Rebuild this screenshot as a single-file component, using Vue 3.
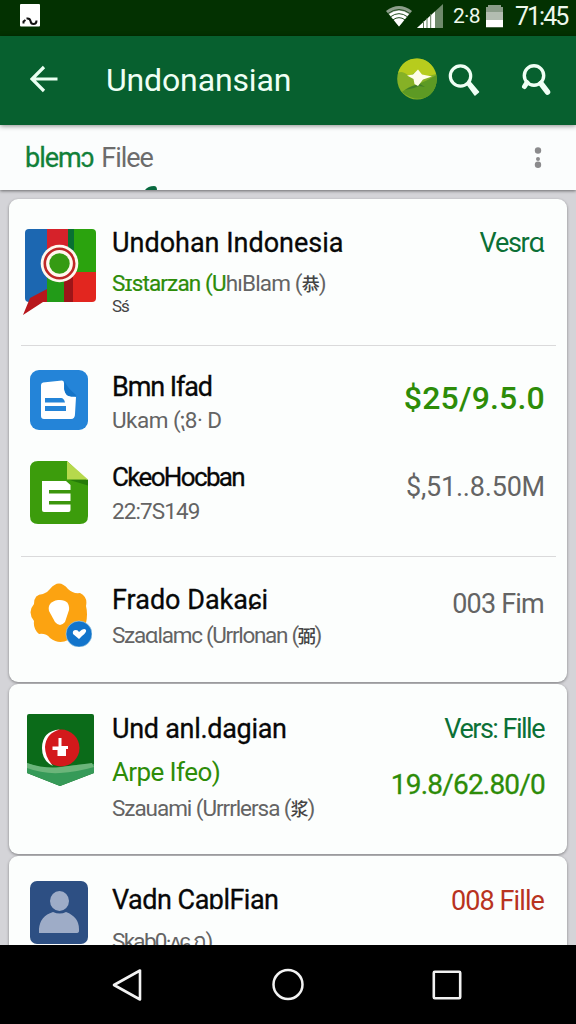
<script setup>
const cards = [
  {
    id: 'one',
    rows: [
      {
        id: 'r1', icon: 'chat',
        lines: [
          { c: 'title t1', parts: [{ t: 'Undohan Indonesia' }] },
          { c: 'sub s1', parts: [{ t: 'Sɪstarzan (U', c: 'lime' }, { t: 'hıBlam (' }, { t: '恭', c: 'cjk' }, { t: ')' }] },
          { c: 'tiny', parts: [{ t: 'Sś' }] },
        ],
        values: [{ c: 'green v1', t: 'Vesrɑ' }],
      },
      {
        id: 'r2', icon: 'doc',
        lines: [
          { c: 'title t2', parts: [{ t: 'Bmn Ifad' }] },
          { c: 'sub s2', parts: [{ t: 'Ukam (⁏8· D' }] },
        ],
        values: [{ c: 'lime v2', t: '$25/9.5.0' }],
      },
      {
        id: 'r3', icon: 'sheet',
        lines: [
          { c: 'title t3', parts: [{ t: 'CkeoHocban' }] },
          { c: 'sub s3', parts: [{ t: '22:7S149' }] },
        ],
        values: [{ c: 'v3', t: '$,51..8.50M' }],
      },
      {
        id: 'r4', icon: 'badge',
        lines: [
          { c: 'title t4', parts: [{ t: 'Frado Dakaɕi' }] },
          { c: 'sub s4', parts: [{ t: 'Szaɑlamc (Urrlonan (' }, { t: '弼', c: 'cjk' }, { t: ')' }] },
        ],
        values: [{ c: 'v4', t: '003 Fim' }],
      },
    ],
  },
  {
    id: 'two',
    rows: [
      {
        id: 'r5', icon: 'shield',
        lines: [
          { c: 'title t5', parts: [{ t: 'Und anl.dagian' }] },
          { c: 'lime sub5', parts: [{ t: 'Arpe Ifeo)' }] },
          { c: 'sub s5', parts: [{ t: 'Szauami (Urrrlersa (' }, { t: '浆', c: 'cjk' }, { t: ')' }] },
        ],
        values: [{ c: 'green v5', t: 'Vers: Fille' }, { c: 'lime v6', t: '19.8/62.80/0' }],
      },
    ],
  },
  {
    id: 'three',
    rows: [
      {
        id: 'r6', icon: 'person',
        lines: [
          { c: 'title t6', parts: [{ t: 'Vadn CaɒlFian' }] },
          { c: 'sub s6', parts: [{ t: 'Skab0·ᴧɕ.ก)' }] },
        ],
        values: [{ c: 'red v7', t: '008 Fille' }],
      },
    ],
  },
]
</script>

<template>
  <div class="screen">
    <header class="status">
      <svg class="note" width="20" height="23" viewBox="0 0 20 23">
        <rect width="20" height="22.500" rx="1" fill="#fff" />
        <path d="M3.500 19.500v-2l2-1.500M6.500 14.500q3.500-.5 4 2.500.5 3 3 3 3 0 3-3.500" fill="none" stroke="#111" stroke-width="2" />
      </svg>
      <span class="grow"></span>
      <svg class="wifi" width="28" height="22" viewBox="0 0 28 22">
        <path d="M1 6Q14-4 27 6L14 21.500z" fill="#8d9f8b" />
        <path d="M4 9Q14 2 24 9L14 21.500z" fill="#fff" />
        <path d="M3 8.500Q14 .5 25 8.500M5.500 11.800Q14 5.500 22.500 11.800M8 14.800Q14 10.500 20 14.800" fill="none" stroke="#244d20" stroke-width="1" />
      </svg>
      <svg class="signal" width="26" height="24" viewBox="0 0 26 24">
        <path d="M26 0v24H0z" fill="#6f8a6c" />
        <path d="M18 7.400V24H0z" fill="#fff" />
        <path d="M6.500 17v7M10 14v10M13.700 10v14" stroke="#5e7a5b" stroke-width="1" />
      </svg>
      <span class="pct">2·8</span>
      <svg class="battery" width="17" height="24" viewBox="0 0 17 24">
        <path d="M2 1h13v2h2v20.500H0V3h2z" fill="#8b9c89" />
        <path d="M0 8h17v8H0z" fill="#b3bdb1" />
        <path d="M0 16h17v7H0z" fill="#fff" />
      </svg>
      <span class="time">71:45</span>
    </header>

    <nav class="toolbar">
      <svg class="back" width="28" height="28" viewBox="0 0 28 28">
        <path d="M14 2L2 14l12 12M2.500 14H27.500" fill="none" stroke="#eafff2" stroke-width="3.200" />
      </svg>
      <h1>Undonansian</h1>
      <svg class="orb" width="40" height="42" viewBox="0 0 40 42">
        <ellipse cx="20" cy="21" rx="19.800" ry="20.600" fill="#86b126" />
        <path d="M1 15C4 5 11 .5 20 .5S36 6 39 16L28 19 19 14 12 18Q5 12 1 15z" fill="#b7cc1d" />
        <path d="M5 34Q12 28 19 27l5-2Q31 22 39.500 17 41 29 33 37 20 46 5 34z" fill="#5d9a24" />
        <path d="M8 32q8-5 15-6l5 3-6-1-5 2z" fill="#427f27" />
        <path d="M10 17.500l6-1 5-5 4 5 10 2-9 3-5 6.500-3.500-2-1-5z" fill="#fffde9" />
      </svg>
      <svg class="search" width="32" height="34" viewBox="0 0 32 34">
        <circle cx="12.500" cy="13" r="10.200" fill="none" stroke="#effff5" stroke-width="3.200" />
        <path d="M19 21l3-2 8.500 10-3.500 3z" fill="#effff5" stroke="#effff5" stroke-width="1.500" stroke-linejoin="round" />
      </svg>
      <svg class="person-search" width="30" height="34" viewBox="0 0 30 34">
        <circle cx="13" cy="12.500" r="9.700" fill="none" stroke="#effff5" stroke-width="3.400" />
        <path d="M20 20.500l6.500 8.500" stroke="#effff5" stroke-width="5.500" stroke-linecap="round" />
        <path d="M6 19.500l-2.500 4" stroke="#effff5" stroke-width="5" stroke-linecap="round" />
      </svg>
    </nav>

    <div class="tabs">
      <span class="tab active">blemɔ</span>
      <span class="tab">Filee</span>
      <svg class="more" width="8" height="22" viewBox="0 0 8 22">
        <circle cx="4" cy="3.500" r="3.200" /><circle cx="4" cy="12" r="2" /><circle cx="4" cy="17.700" r="3.200" />
      </svg>
      <svg class="nub" width="12" height="4" viewBox="0 0 12 4"><path d="M0 4Q3 0 9 0q3 0 3 4z" fill="#08693f" /></svg>
    </div>

    <main class="list">
      <section v-for="card in cards" :key="card.id" class="card">
        <article v-for="row in card.rows" :key="row.id" class="row" :class="row.id">
          <div class="icon">
            <svg v-if="row.icon === 'chat'" width="74" height="88" viewBox="0 0 74 88">
              <defs><clipPath id="bubble"><rect x="2" y="1" width="71" height="73" rx="4" /></clipPath></defs>
              <g clip-path="url(#bubble)">
                <path d="M2 0h22v76H2z" fill="#1c67b1" />
                <path d="M24 0h21v50H24z" fill="#d6222a" />
                <path d="M24 50h17v25H24z" fill="#229b18" />
                <path d="M41 44h9v31h-9z" fill="#9d1518" />
                <path d="M45 0h6v48h-6z" fill="#087033" />
                <path d="M51 0h23v44H51z" fill="#2ba30e" />
                <path d="M50 44h24v31H50z" fill="#e2261f" />
              </g>
              <path d="M24 61v13h-4L0 87 7 70z" fill="#b8171c" />
              <circle cx="36.500" cy="35.500" r="18.800" fill="#fff8ef" />
              <circle cx="36.500" cy="35.500" r="14.700" fill="none" stroke="#bd2726" stroke-width="2.600" />
              <circle cx="36.500" cy="35.500" r="10.200" fill="#359b13" />
            </svg>
            <svg v-else-if="row.icon === 'doc'" width="58" height="60" viewBox="0 0 58 60">
              <rect width="58" height="60" rx="9" fill="#2484d8" />
              <path d="M13 12.500L32 10.500Q34 10.500 34 13v6q1 8 12 8l-1 17q0 5-4 5H14q-3 0-3-3V15q0-2 2-2.500z" fill="#fff" />
              <path d="M34.500 11q2 6 12 14.500Q35 29 34.500 19z" fill="#1474c8" />
              <path d="M15 28h16q3 0 4 4.500H15zM15 36h21v5H15z" fill="#2484d8" />
            </svg>
            <svg v-else-if="row.icon === 'sheet'" width="58" height="63" viewBox="0 0 58 63">
              <path d="M8 0h29l21 20v35q0 8-8 8H8q-8 0-8-8V8q0-8 8-8z" fill="#3c9c0c" />
              <path d="M38 18.500h20v6z" fill="#257b09" />
              <path d="M37 0l21 18.500H37z" fill="#b6d94c" />
              <path d="M12 20h24l4.500 4v25q0 2-2 2H14q-2 0-2-2z" fill="#fff" />
              <path d="M19 29h22v3.500H19zM19 40h22v3.500H19z" fill="#3c960c" />
            </svg>
            <svg v-else-if="row.icon === 'badge'" width="62" height="64" viewBox="0 0 62 64">
              <path d="M20 6q9-11 18 0q5 5 12 4q8 4 6 13q2 8 0 17q-2 7-11 9L38 57q-9 5-18-2q-4-5-11-4Q3 46 4 38q-7-9 0-17Q4 11 13 11q4-1 7-5z" fill="#fca311" />
              <path d="M28 17q12-1 11 10l-4 12q-5 6-10 0l-6-11q-2-9 9-11z" fill="#fff" />
              <circle cx="49" cy="51" r="13" fill="#1274cb" stroke="#b3d6e8" stroke-width=".6" />
              <path d="M49 56l-6-5q-1-4 3-4 2 0 3 2 5-5 7-2 1 2-4 6z" fill="#fff" />
            </svg>
            <svg v-else-if="row.icon === 'shield'" width="67" height="72" viewBox="0 0 67 72">
              <path d="M2 0h63q2 0 2 2v57L33 72 0 59V2q0-2 2-2z" fill="#0b6b19" />
              <path d="M0 49q17 7 34 4t33-3v9L33 72 0 59z" fill="#369a58" />
              <path d="M0 49q18 6 34 4t31-4l2 4q-17 5-34 6T0 54z" fill="#6bb57a" />
              <circle cx="34" cy="34" r="18.500" fill="#d3191b" />
              <path d="M33 15.500Q15 17 15 34q0 13 11 18-8-9-8-19Q19 19 33 15.500z" fill="#fff" />
              <path d="M31.500 24h3v8h6.500v3h-2v7h-8.500v-6h-5v-3.500h6z" fill="#fff" />
            </svg>
            <svg v-else width="58" height="63" viewBox="0 0 58 63">
              <rect width="58" height="63" rx="7" fill="#2d4f83" />
              <ellipse cx="29.500" cy="20" rx="9.500" ry="10" fill="#9eacc7" />
              <path d="M9 52V48q1-13 14-17 7 3 13 0 13 5 13 17v2q0 2-3 2z" fill="#9eacc7" />
            </svg>
          </div>
          <div class="lines">
            <div v-for="(line, i) in row.lines" :key="i" :class="line.c"><span v-for="(p, k) in line.parts" :key="k" :class="p.c">{{ p.t }}</span></div>
          </div>
          <div class="values">
            <div v-for="(v, i) in row.values" :key="i" class="value" :class="v.c">{{ v.t }}</div>
          </div>
        </article>
      </section>
    </main>

    <footer class="navbar">
      <svg width="30" height="34" viewBox="0 0 30 34"><path d="M28 2.500v29L2 17z" fill="none" stroke="#f2f2f2" stroke-width="2.600" stroke-linejoin="round" /></svg>
      <svg width="34" height="34" viewBox="0 0 34 34"><circle cx="18" cy="16.500" r="14.500" fill="none" stroke="#f2f2f2" stroke-width="2.500" /></svg>
      <svg width="30" height="30" viewBox="0 0 30 30"><rect x="1.800" y="1.800" width="26.400" height="26.400" rx="1" fill="none" stroke="#f2f2f2" stroke-width="2.600" /></svg>
    </footer>
  </div>
</template>

<style>
body { margin: 0; background: #000; }
</style>

<style scoped>
.screen {
  width: 576px;
  height: 1024px;
  display: flex;
  flex-direction: column;
  overflow: hidden;
  font-family: Roboto, "Noto Sans CJK SC", sans-serif;
  background: #d4d4d8;
}
svg { display: block; flex: none; }
.grow { flex: 1; }

.status {
  flex: none;
  height: 36px;
  box-sizing: border-box;
  padding: 4px 8px 0 20px;
  display: flex;
  align-items: flex-start;
  color: #eef8ec;
  background: #033101;
}
.wifi { margin-right: 4px; margin-top: 1px; margin-left: -2px; }
.signal { margin-right: 10px; }
.pct { width: 28px; font-size: 21px; line-height: 24px; letter-spacing: -.8px; white-space: nowrap; }
.battery { margin-left: 5px; margin-right: 12px; }
.time { width: 53px; font-size: 25px; line-height: 26px; letter-spacing: -2px; white-space: nowrap; }

.toolbar {
  flex: none;
  height: 89px;
  box-sizing: border-box;
  display: flex;
  align-items: center;
  padding: 0 25px 0 30px;
  background: #07602f;
  box-shadow: 0 1px 5px rgba(0, 0, 0, .45);
  position: relative;
  z-index: 2;
}
h1 {
  margin: -2px 0 0 48px;
  flex: 1;
  font-size: 32px;
  line-height: 40px;
  letter-spacing: -.15px;
  font-weight: 400;
  color: #effff5;
}
.orb { margin-right: 11px; margin-top: -3px; }
.search { margin-right: 41px; margin-top: -2px; }
.person-search { margin-top: -2px; }
.back { margin-top: -3px; }

.tabs {
  flex: none;
  position: relative;
  z-index: 1;
  height: 65px;
  box-sizing: border-box;
  padding: 0 34px 0 25px;
  display: flex;
  align-items: center;
  gap: 8px;
  background: #fbfdfd;
  box-shadow: 0 1px 3px rgba(0, 0, 0, .5);
}
.tab { font-size: 27px; line-height: 32px; color: #6c6c6c; letter-spacing: -1px; }
.tab.active { color: #118039; -webkit-text-stroke: .3px #118039; }
.more { margin-left: auto; fill: #8b8b8d; }
.nub { position: absolute; left: 145px; bottom: 0; }

.list {
  flex: 1;
  min-height: 0;
  overflow: hidden;
  padding: 9px 9px 0;
  display: flex;
  flex-direction: column;
  gap: 2px;
}
.card {
  flex: none;
  border-radius: 9px;
  background: #fcfefd;
  box-shadow: 0 1px 3px rgba(0, 0, 0, .4);
}
.row {
  display: flex;
  box-sizing: border-box;
  padding-right: 22px;
  position: relative;
  color: #646464;
}
.icon { width: 103px; flex: none; box-sizing: border-box; }
.lines { flex: 1; white-space: nowrap; min-width: 0; }
.values { flex: none; text-align: right; white-space: nowrap; }
.title { font-size: 27px; line-height: 32px; color: #080808; -webkit-text-stroke: .3px #080808; }
.sub { font-size: 22.500px; line-height: 28px; }
.cjk { font-size: 18px; line-height: 1; font-weight: 500; color: #444; }
.tiny { font-size: 17px; line-height: 20px; letter-spacing: -1px; color: #444; }
.value { font-size: 27px; line-height: 32px; }
.lime { color: #2d8c08; }
.green { color: #0b7036; }
.red { color: #b8331f; }

.r1::after, .r3::after {
  content: "";
  position: absolute;
  left: 12px;
  right: 11px;
  bottom: 0;
  height: 1.500px;
  background: #dadadb;
}

.r1 { height: 147px; }
.r1 .icon { padding: 29px 0 0 14px; }
.r1 .lines, .r1 .values { padding-top: 28px; }
.s1 { margin-top: 10px; letter-spacing: -.85px; }
.s1 .lime { -webkit-text-stroke: .2px #2d8c08; }
.tiny { margin-top: -1px; }
.v1 { letter-spacing: -1.300px; margin-right: 1px; }

.r2 { height: 104px; }
.r2 .icon { padding: 24px 0 0 21px; }
.r2 .lines { padding-top: 25px; }
.r2 .values { padding-top: 34px; }
.t2 { letter-spacing: -1.100px; }
.s2 { margin-top: 3px; letter-spacing: -.5px; }

.r3 { height: 107px; }
.r3 .icon { padding: 11px 0 0 21px; }
.r3 .lines { padding-top: 11px; }
.r3 .values { padding-top: 21px; }
.t3 { font-size: 26px; letter-spacing: -1.650px; }
.s3 { margin-top: 4px; letter-spacing: -.9px; }
.v3 { letter-spacing: -.2px; }

.r4 { height: 125px; }
.r4 .icon { padding: 26px 0 0 21px; }
.r4 .lines { padding-top: 27px; }
.r4 .values { padding-top: 31px; }
.s4 { margin-top: 5px; letter-spacing: -1.300px; }
.v4 { letter-spacing: -.8px; margin-right: 1px; }

.r5 { height: 170px; }
.r5 .icon { padding: 30px 0 0 18px; }
.r5 .lines, .r5 .values { padding-top: 29px; }
.t5 { letter-spacing: -.3px; }
.sub5 { margin-top: 11px; font-size: 26px; line-height: 32px; letter-spacing: -.6px; }
.s5 { margin-top: 6px; letter-spacing: -1.050px; }
.v5 { letter-spacing: -1.500px; margin-right: 1px; }

.r6 { height: 130px; }
.r6 .icon { padding: 25px 0 0 21px; }
.r6 .lines { padding-top: 28px; }
.r6 .values { padding-top: 29px; }
.t6 { letter-spacing: -.5px; }
.s6 { margin-top: 11px; letter-spacing: -1.700px; }
.v7 { letter-spacing: -.9px; margin-right: 1px; }

.v2 { font-size: 32px; line-height: 36px; font-weight: 500; letter-spacing: .2px; }
.v6 { margin-top: 24px; font-size: 28px; letter-spacing: -.8px; -webkit-text-stroke: .3px #2d8c08; }

.navbar {
  flex: none;
  position: relative;
  z-index: 3;
  height: 79px;
  box-sizing: border-box;
  padding: 0 114px 0 112px;
  display: flex;
  align-items: center;
  justify-content: space-between;
  background: #000;
}
</style>
